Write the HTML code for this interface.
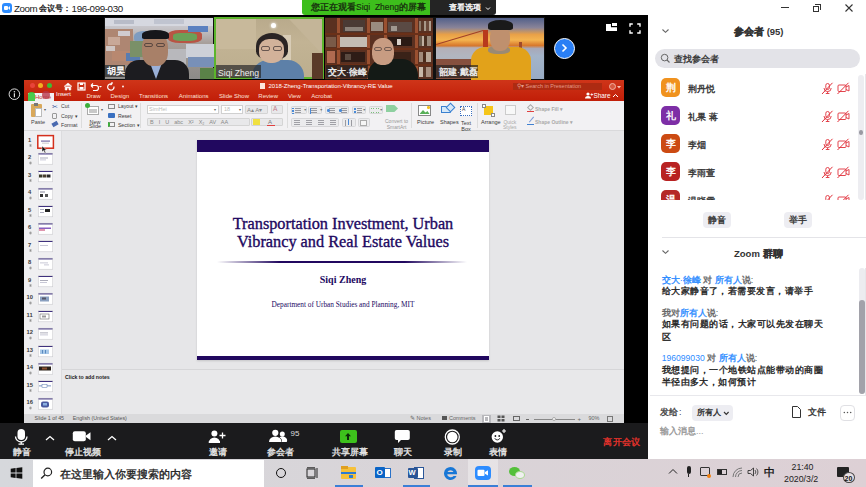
<!DOCTYPE html>
<html><head><meta charset="utf-8">
<style>
*{margin:0;padding:0;box-sizing:border-box}
html,body{width:866px;height:487px;overflow:hidden;background:#000;font-family:"Liberation Sans",sans-serif}
.a{position:absolute}
.t{position:absolute;white-space:nowrap;line-height:1}
.j{text-align:justify;text-align-last:justify}
.c{-webkit-text-stroke-width:.35px}
</style></head><body>
<!-- title bar -->
<div class="a" style="left:0;top:0;width:866px;height:15px;background:#fff"></div>
<div class="a" style="left:2px;top:3px;width:10px;height:10px;border-radius:3px;background:#2d8cff"></div>
<div class="a" style="left:4px;top:6px;width:4px;height:4px;background:#fff;border-radius:1px"></div>
<div class="a" style="left:8px;top:6px;width:0;height:0;border-top:2px solid transparent;border-bottom:2px solid transparent;border-right:2px solid #fff"></div>
<div class="t" style="left:14px;top:3.7px;font-size:9.8px;letter-spacing:-.45px;color:#222">Zoom</div>
<div class="t" style="left:39px;top:3.5px;font-size:8.4px;color:#222"><span class="c">会议号：</span></div>
<div class="t" style="left:71.6px;top:3.7px;font-size:9.8px;letter-spacing:-.4px;color:#222">196-099-030</div>
<!-- window controls -->
<div class="a" style="left:781px;top:7px;width:8px;height:1px;background:#333"></div>
<div class="a" style="left:813px;top:6px;width:6px;height:6px;border:1px solid #333"></div>
<div class="a" style="left:815px;top:4px;width:6px;height:6px;border-top:1px solid #333;border-right:1px solid #333"></div>
<svg class="a" style="left:844px;top:3px" width="10" height="10"><path d="M1.5 1.5L8.5 8.5M8.5 1.5L1.5 8.5" stroke="#333" stroke-width="1.1"/></svg>
<!-- banner -->
<div class="a" style="left:302px;top:0;width:128px;height:14.5px;background:#3dbf1c;border-radius:0 0 0 3px"></div>
<div class="t j" style="left:311px;top:3px;width:110px;font-size:8.5px;color:#17300e;-webkit-text-stroke:.15px #17300e"><span class="c">您正在观看</span>Siqi&nbsp; Zheng<span class="c">的屏幕</span></div>
<div class="a" style="left:430px;top:0;width:66px;height:14.5px;background:#242424;border-radius:0 0 3px 0"></div>
<div class="t j" style="left:449px;top:3.5px;width:29px;font-size:7.8px;color:#fff"><span class="c">查看选项</span></div>
<svg class="a" style="left:484.5px;top:5.5px" width="6" height="5"><path d="M1 1.5L3 3.5L5 1.5" stroke="#fff" stroke-width="1" fill="none"/></svg>


<!-- thumbnails -->
<div class="a" style="left:104px;top:17px;width:110px;height:63px;background:#111;overflow:hidden">
 <div class="a" style="left:1px;top:1px;width:108px;height:61px;background:linear-gradient(180deg,#d2d4dc 0%,#c4c2c6 18%,#a8a09c 40%,#9c9690 65%,#8c8a88 100%)"></div>
 <div class="a" style="left:1px;top:1px;width:108px;height:8px;background:#d6d8e0"></div>
 <div class="a" style="left:10px;top:3px;width:20px;height:4px;background:#b8bcc8"></div>
 <div class="a" style="left:50px;top:2px;width:30px;height:5px;background:#c0c4d0"></div>
 <div class="a" style="left:1px;top:12px;width:28px;height:36px;background:#ae8672"></div>
 <div class="a" style="left:14px;top:14px;width:12px;height:5px;background:#d0ccd0"></div>
 <div class="a" style="left:2px;top:29px;width:9px;height:5px;background:#cfc6c4"></div>
 <div class="a" style="left:4px;top:20px;width:12px;height:8px;background:#c8a898"></div>
 <div class="a" style="left:8px;top:34px;width:18px;height:10px;background:#b88870"></div>
 <div class="a" style="left:22px;top:36px;width:14px;height:8px;background:#5a7cb0"></div>
 <div class="a" style="left:30px;top:14px;width:24px;height:13px;background:#7e9cc0;border-radius:40%"></div>
 <div class="a" style="left:26px;top:24px;width:14px;height:16px;background:#7a9068"></div>
 <div class="a" style="left:64px;top:13px;width:34px;height:13px;background:#b85444;border-radius:35%"></div>
 <div class="a" style="left:69px;top:15.5px;width:24px;height:8px;background:#6aa058;border-radius:30%"></div>
 <div class="a" style="left:84px;top:9px;width:20px;height:6px;background:#5a80c0"></div>
 <div class="a" style="left:82px;top:27px;width:28px;height:14px;background:#cdd0d8"></div>
 <div class="a" style="left:84px;top:40px;width:26px;height:10px;background:#7890b8"></div>
 <div class="a" style="left:62px;top:32px;width:20px;height:26px;background:#b8b8bc"></div>
 <div class="a" style="left:96px;top:51px;width:14px;height:11px;background:#5a8248"></div>
 <div class="a" style="left:21px;top:43px;width:64px;height:22px;background:#1c1c20;border-radius:14px 14px 0 0"></div>
 <div class="a" style="left:46px;top:46px;width:12px;height:16px;background:#9ab0d8;clip-path:polygon(0 0,100% 0,50% 100%)"></div>
 <div class="a" style="left:38px;top:15px;width:26px;height:34px;background:#a88068;border-radius:45% 45% 40% 40%"></div>
 <div class="a" style="left:37.5px;top:13px;width:27px;height:9px;background:#16161a;border-radius:50% 50% 15% 15%"></div>
 <div class="a" style="left:40px;top:26px;width:9px;height:4px;border:.8px solid #3a3030;border-radius:2px;opacity:.7"></div>
 <div class="a" style="left:52px;top:26px;width:9px;height:4px;border:.8px solid #3a3030;border-radius:2px;opacity:.7"></div>
 <div class="a" style="left:1px;top:48px;width:20px;height:12px;background:rgba(20,20,20,.6)"></div>
 <div class="t j" style="width:16.5px;left:3px;top:50px;font-size:9px;color:#fff"><span class="c">胡昊</span></div>
</div>
<div class="a" style="left:214px;top:17px;width:110px;height:62px;background:#5cb52c;overflow:hidden">
 <div class="a" style="left:2px;top:2px;width:106px;height:58px;background:linear-gradient(180deg,#b9aa8c 0%,#c2b394 40%,#bcae8e 100%)"></div>
 <div class="a" style="left:2px;top:2px;width:40px;height:30px;background:#c8b99b"></div>
 <div class="a" style="left:75px;top:2px;width:33px;height:35px;background:#c4b598;clip-path:polygon(0 0,100% 0,100% 100%)"></div>
 <div class="a" style="left:57px;top:6px;width:5px;height:5px;background:#fff;border-radius:50%;box-shadow:0 0 3px #fff"></div>
 <div class="a" style="left:69px;top:18px;width:8px;height:28px;background:#d8ccb6"></div>
 <div class="a" style="left:98px;top:36px;width:11px;height:26px;background:#5a3a28"></div>
 <div class="a" style="left:38px;top:43px;width:52px;height:20px;background:#5d80a8;border-radius:16px 16px 0 0"></div>
 <div class="a" style="left:42px;top:16px;width:32px;height:26px;background:#2a2424;border-radius:50% 50% 30% 30%"></div>
 <div class="a" style="left:45px;top:22px;width:25px;height:24px;background:#d2b29a;border-radius:40% 40% 45% 45%"></div>
 <div class="a" style="left:47px;top:29px;width:9px;height:5px;border:.8px solid #3a3030;border-radius:2px;opacity:.7"></div>
 <div class="a" style="left:59px;top:29px;width:9px;height:5px;border:.8px solid #3a3030;border-radius:2px;opacity:.7"></div>
 <div class="a" style="left:2px;top:48px;width:44.6px;height:13px;background:rgba(40,40,40,.7)"></div>
 <div class="t" style="left:4px;top:51.5px;font-size:8.6px;color:#eee">Siqi Zheng</div>
</div>
<div class="a" style="left:325px;top:17px;width:110px;height:63px;background:#111;overflow:hidden">
 <div class="a" style="left:0;top:1px;width:108px;height:61px;background:#5a3020"></div>
 <div class="a" style="left:12px;top:1px;width:3px;height:61px;background:#9a5030"></div>
 <div class="a" style="left:42px;top:1px;width:3px;height:61px;background:#9a5030"></div>
 <div class="a" style="left:59px;top:1px;width:3px;height:61px;background:#9a5030"></div>
 <div class="a" style="left:90px;top:1px;width:3px;height:61px;background:#9a5030"></div>
 <div class="a" style="left:0;top:16px;width:108px;height:2px;background:#6a3018"></div>
 <div class="a" style="left:0;top:31px;width:108px;height:2px;background:#6a3018"></div>
 <div class="a" style="left:0;top:47px;width:108px;height:2px;background:#6a3018"></div>
 <div class="a" style="left:15px;top:20px;width:27px;height:10px;background:#c4bcb2"></div>
 <div class="a" style="left:46px;top:5px;width:12px;height:9px;background:#9a8c80"></div>
 <div class="a" style="left:2px;top:34px;width:8px;height:12px;background:#b06a50"></div>
 <div class="a" style="left:18px;top:3px;width:22px;height:12px;background:#4a3a34"></div>
 <div class="a" style="left:20px;top:10px;width:18px;height:4px;background:#8a8078"></div>
 <div class="a" style="left:63px;top:5px;width:24px;height:10px;background:#5a4a44"></div>
 <div class="a" style="left:66px;top:9px;width:6px;height:5px;background:#a09890"></div>
 <div class="a" style="left:94px;top:4px;width:12px;height:10px;background:linear-gradient(90deg,#8a7a6a 0 20%,#5a3a2a 20% 40%,#a89888 40% 60%,#6a4a3a 60% 80%,#b0a090 80%)"></div>
 <div class="a" style="left:94px;top:19px;width:12px;height:10px;background:linear-gradient(90deg,#6a5a4a 0 25%,#c0b0a0 25% 45%,#4a3020 45% 70%,#9a8a7a 70%)"></div>
 <div class="a" style="left:94px;top:35px;width:12px;height:10px;background:linear-gradient(90deg,#a08a7a 0 30%,#4a2a1a 30% 55%,#b8a898 55%)"></div>
 <div class="a" style="left:94px;top:50px;width:12px;height:10px;background:linear-gradient(90deg,#c8b8a8 0 35%,#5a3a2a 35% 60%,#a89080 60%)"></div>
 <div class="a" style="left:63px;top:20px;width:24px;height:9px;background:#2a1a14"></div>
 <div class="a" style="left:72px;top:22px;width:4px;height:6px;background:#d8d0c8"></div>
 <div class="a" style="left:66px;top:35px;width:20px;height:10px;background:#3a2218"></div>
 <div class="a" style="left:16px;top:35px;width:24px;height:10px;background:#2e1c16"></div>
 <div class="a" style="left:20px;top:37px;width:6px;height:6px;background:#5a4a40"></div>
 <div class="a" style="left:1px;top:20px;width:10px;height:10px;background:#7a5a48"></div>
 <div class="a" style="left:43px;top:42px;width:50px;height:22px;background:#141a16;border-radius:16px 16px 0 0"></div>
 <div class="a" style="left:47px;top:21px;width:22px;height:27px;background:#c89c82;border-radius:45% 45% 40% 40%"></div>
 <div class="a" style="left:48.5px;top:30px;width:8px;height:4px;border:.8px solid #3a3030;border-radius:2px;opacity:.6"></div>
 <div class="a" style="left:59px;top:30px;width:8px;height:4px;border:.8px solid #3a3030;border-radius:2px;opacity:.6"></div>
 <div class="a" style="left:1px;top:48px;width:42px;height:13px;background:rgba(30,30,30,.65)"></div>
 <div class="t j" style="width:38.5px;left:3px;top:51px;font-size:9px;color:#eee"><span class="c">交大</span>·<span class="c">徐峰</span></div>
</div>
<div class="a" style="left:435px;top:17px;width:110px;height:63px;background:#111;overflow:hidden">
 <div class="a" style="left:1px;top:1px;width:108px;height:61px;background:linear-gradient(180deg,#52608a 0%,#8a8498 16%,#e8a048 27%,#f4b450 36%,#d8782c 45%,#a8a8b8 50%,#a4b4c8 62%,#98acc4 100%)"></div>
 <div class="a" style="left:1px;top:42px;width:40px;height:20px;background:#86503e"></div>
 <div class="a" style="left:1px;top:30px;width:50px;height:12px;background:#c0b8b8;opacity:.5"></div>
 <div class="a" style="left:1px;top:27px;width:49px;height:1px;background:#a04028;transform:rotate(-16.6deg);transform-origin:0 0"></div>
 <div class="a" style="left:47.5px;top:13px;width:5px;height:17px;background:#b83a1c"></div>
 <div class="a" style="left:84px;top:25px;width:3px;height:10px;background:#a04a2a"></div>
 <div class="a" style="left:36px;top:30px;width:60px;height:35px;background:#e2a21a;border-radius:14px 14px 0 0"></div>
 <div class="a" style="left:53px;top:29px;width:22px;height:8px;background:#9a8a74;border-radius:40%"></div>
 <div class="a" style="left:55px;top:9px;width:20px;height:25px;background:#bf906e;border-radius:40% 40% 45% 45%"></div>
 <div class="a" style="left:53px;top:3px;width:25px;height:10px;background:#1a1a1a;border-radius:50% 50% 20% 20%"></div>
 <div class="a" style="left:1px;top:48px;width:42px;height:13px;background:rgba(30,30,30,.65)"></div>
 <div class="t j" style="width:39px;left:4px;top:51px;font-size:9px;color:#eee"><span class="c">韶建</span>·<span class="c">戴磊</span></div>
</div>
<div class="a" style="left:553.5px;top:37.5px;width:21px;height:21px;border-radius:50%;background:#2a7ff5;border:1.5px solid #fff"></div>
<svg class="a" style="left:558px;top:42px" width="12" height="12"><path d="M4.5 2.5L8 6L4.5 9.5" stroke="#fff" stroke-width="1.6" fill="none"/></svg>
<div class="a" style="left:606px;top:24px;width:11px;height:7px;background:#fff;clip-path:polygon(0 0,45% 0,45% 45%,100% 45%,100% 100%,0 100%)"></div>
<div class="a" style="left:612px;top:23px;width:5px;height:3px;background:#fff"></div>
<svg class="a" style="left:628.5px;top:22.5px" width="12" height="11"><path d="M1 3.8V1H3.8M8.2 1H11V3.8M11 7.2V10H8.2M3.8 10H1V7.2" stroke="#fff" stroke-width="1.4" fill="none"/></svg>
<!-- info icon -->
<svg class="a" style="left:8px;top:87.5px" width="13" height="13"><circle cx="6.4" cy="6.2" r="5.3" fill="none" stroke="#ddd" stroke-width="1"/><circle cx="6.4" cy="3.7" r=".8" fill="#ddd"/><path d="M6.4 5.3V9.2" stroke="#ddd" stroke-width="1.2"/></svg>


<!-- zoom toolbar -->
<div class="a" style="left:0;top:423px;width:648px;height:36px;background:#1b1b1d"></div>
<svg class="a" style="left:12px;top:428px" width="20" height="18">
 <rect x="5.5" y="1" width="7.5" height="11" rx="3.75" fill="#fff"/>
 <path d="M3.5 8.5A5.75 5.5 0 0 0 15 8.5" fill="none" stroke="#fff" stroke-width="1.3"/>
 <path d="M9.25 14V16M6.5 16.2H12" stroke="#fff" stroke-width="1.2"/>
</svg>
<svg class="a" style="left:44px;top:434px" width="12" height="8"><path d="M2 6L6 2.5L10 6" stroke="#fff" stroke-width="1.3" fill="none"/></svg>
<svg class="a" style="left:72px;top:430px" width="20" height="13"><rect x="0.8" y="1.3" width="13" height="10" rx="2" fill="#fff"/><path d="M14 5.5L18.5 2.2V10.3L14 7Z" fill="#fff"/></svg>
<svg class="a" style="left:106px;top:434px" width="12" height="8"><path d="M2 6L6 2.5L10 6" stroke="#fff" stroke-width="1.3" fill="none"/></svg>
<svg class="a" style="left:206px;top:428px" width="22" height="17">
 <circle cx="8.4" cy="5.5" r="3" fill="#fff"/>
 <path d="M2.8 15A5.6 5.6 0 0 1 14 15Z" fill="#fff"/><rect x="2.8" y="13" width="11.2" height="2" fill="#fff"/>
 <path d="M13.5 7.5H19.5M16.5 4.5V10.5" stroke="#fff" stroke-width="1.3"/>
</svg>
<svg class="a" style="left:267px;top:428px" width="22" height="16">
 <circle cx="8.3" cy="4.8" r="3.1" fill="#fff"/>
 <circle cx="15.3" cy="6" r="2.5" fill="#fff"/>
 <path d="M2 14A6.3 5.5 0 0 1 14.6 14Z" fill="#fff"/>
 <path d="M15 14A4.5 4.5 0 0 0 12.5 9.5A4.5 4 0 0 1 19.7 14Z" fill="#fff"/>
</svg>
<div class="t" style="left:290.6px;top:429.5px;font-size:8px;color:#ddd">95</div>
<div class="a" style="left:339.6px;top:430.2px;width:17px;height:12.6px;background:#3dc11c;border-radius:2px"></div>
<svg class="a" style="left:344px;top:432px" width="8" height="9"><path d="M4 1L7 4.2H5V8H3V4.2H1Z" fill="#0c2a08"/></svg>
<svg class="a" style="left:394px;top:429px" width="17" height="15"><path d="M2.5 1H14A1.8 1.8 0 0 1 15.8 2.8V9.2A1.8 1.8 0 0 1 14 11H7L4 14V11H2.5A1.8 1.8 0 0 1 .8 9.2V2.8A1.8 1.8 0 0 1 2.5 1Z" fill="#fff"/></svg>
<svg class="a" style="left:444px;top:428.5px" width="17" height="17"><circle cx="8.3" cy="8" r="7" fill="none" stroke="#fff" stroke-width="1.3"/><circle cx="8.3" cy="8" r="5.2" fill="#fff"/></svg>
<svg class="a" style="left:490px;top:428px" width="18" height="16">
 <circle cx="7.3" cy="9" r="5.7" fill="#fff"/>
 <circle cx="5.4" cy="8" r=".9" fill="#1b1b1d"/><circle cx="9.2" cy="8" r=".9" fill="#1b1b1d"/>
 <path d="M4.8 10.2A2.6 2.4 0 0 0 9.8 10.2" fill="none" stroke="#1b1b1d" stroke-width=".9"/>
 <path d="M12 3H16M14 1V5" stroke="#fff" stroke-width="1.1"/>
</svg>
<div class="t j" style="width:18px;left:13px;top:448px;font-size:8.8px;color:#e6e6e6"><span class="c">静音</span></div>
<div class="t j" style="width:33.6px;left:65px;top:447.5px;font-size:8.8px;color:#e6e6e6"><span class="c">停止视频</span></div>
<div class="t j" style="width:17.2px;left:208.6px;top:447.5px;font-size:8.8px;color:#e6e6e6"><span class="c">邀请</span></div>
<div class="t j" style="width:25px;left:266.7px;top:447.5px;font-size:8.8px;color:#e6e6e6"><span class="c">参会者</span></div>
<div class="t j" style="width:33.2px;left:331.5px;top:447.5px;font-size:8.8px;color:#e6e6e6"><span class="c">共享屏幕</span></div>
<div class="t j" style="width:16.8px;left:394.1px;top:447.5px;font-size:8.8px;color:#e6e6e6"><span class="c">聊天</span></div>
<div class="t j" style="width:16.3px;left:444.1px;top:447.5px;font-size:8.8px;color:#e6e6e6"><span class="c">录制</span></div>
<div class="t j" style="width:16.8px;left:488.7px;top:447.5px;font-size:8.8px;color:#e6e6e6"><span class="c">表情</span></div>
<div class="t j" style="width:37.3px;left:603.2px;top:438px;font-size:9px;color:#e8332c"><span class="c">离开会议</span></div>

<!-- right panel -->
<div class="a" style="left:648px;top:15px;width:218px;height:444px;background:#fff"></div>


<!-- right panel content -->
<svg class="a" style="left:661px;top:28px" width="9" height="6"><path d="M1.5 1.5L4.5 4.3L7.5 1.5" stroke="#666" stroke-width="1.1" fill="none"/></svg>
<div class="t j" style="width:47px;left:734px;top:26.5px;font-size:9.5px;color:#333;font-weight:bold"><span class="c">参会者</span> (95)</div>
<div class="a" style="left:655px;top:49px;width:205px;height:19px;border-radius:9.5px;background:#e3e3e8"></div>
<svg class="a" style="left:660px;top:53px" width="11" height="11"><circle cx="4.6" cy="4.6" r="3.3" fill="none" stroke="#666" stroke-width="1"/><path d="M7 7L9.5 9.5" stroke="#666" stroke-width="1.1"/></svg>
<div class="t j" style="width:43.5px;left:673.5px;top:54.5px;font-size:8.6px;color:#333"><span class="c">查找参会者</span></div>
<div class="a" style="left:648px;top:74px;width:210px;height:126px;overflow:hidden">
<div class="a" style="left:13px;top:4px;width:19px;height:19px;border-radius:5px;background:#f0921e"></div>
<div class="t" style="left:13px;width:19px;text-align:center;top:9px;font-size:9.5px;color:#fff"><span class="c">荆</span></div>
<div class="t j" style="left:40px;width:26.5px;top:11px;font-size:9px;color:#333"><span class="c">荆丹悦</span></div>
<svg class="a" style="left:173px;top:8px" width="30" height="13">
 <rect x="4.8" y="1.5" width="3.6" height="6" rx="1.8" fill="none" stroke="#e0303a" stroke-width=".9"/>
 <path d="M3 6A3.6 3.6 0 0 0 10.2 6M6.6 9.6V11.5M4.8 11.5H8.4" stroke="#e0303a" stroke-width=".9" fill="none"/>
 <path d="M1 12L11.5 .8" stroke="#e0303a" stroke-width="1"/>
 <rect x="17" y="3" width="8" height="6.5" rx="1" fill="none" stroke="#e0303a" stroke-width=".9"/>
 <path d="M25 5L28 3.5V9L25 7.5" fill="none" stroke="#e0303a" stroke-width=".9"/>
 <path d="M16.5 12L27.5 .8" stroke="#e0303a" stroke-width="1"/>
</svg>
<div class="a" style="left:13px;top:32px;width:19px;height:19px;border-radius:5px;background:#7d2ea6"></div>
<div class="t" style="left:13px;width:19px;text-align:center;top:37px;font-size:9.5px;color:#fff"><span class="c">礼</span></div>
<div class="t j" style="left:40px;width:29px;top:39px;font-size:9px;color:#333"><span class="c">礼果</span> <span class="c">蒋</span></div>
<svg class="a" style="left:173px;top:36px" width="30" height="13">
 <rect x="4.8" y="1.5" width="3.6" height="6" rx="1.8" fill="none" stroke="#e0303a" stroke-width=".9"/>
 <path d="M3 6A3.6 3.6 0 0 0 10.2 6M6.6 9.6V11.5M4.8 11.5H8.4" stroke="#e0303a" stroke-width=".9" fill="none"/>
 <path d="M1 12L11.5 .8" stroke="#e0303a" stroke-width="1"/>
 <rect x="17" y="3" width="8" height="6.5" rx="1" fill="none" stroke="#e0303a" stroke-width=".9"/>
 <path d="M25 5L28 3.5V9L25 7.5" fill="none" stroke="#e0303a" stroke-width=".9"/>
 <path d="M16.5 12L27.5 .8" stroke="#e0303a" stroke-width="1"/>
</svg>
<div class="a" style="left:13px;top:60px;width:19px;height:19px;border-radius:5px;background:#cc4a12"></div>
<div class="t" style="left:13px;width:19px;text-align:center;top:65px;font-size:9.5px;color:#fff"><span class="c">李</span></div>
<div class="t j" style="left:40px;width:17.5px;top:67px;font-size:9px;color:#333"><span class="c">李烟</span></div>
<svg class="a" style="left:173px;top:64px" width="30" height="13">
 <rect x="4.8" y="1.5" width="3.6" height="6" rx="1.8" fill="none" stroke="#e0303a" stroke-width=".9"/>
 <path d="M3 6A3.6 3.6 0 0 0 10.2 6M6.6 9.6V11.5M4.8 11.5H8.4" stroke="#e0303a" stroke-width=".9" fill="none"/>
 <path d="M1 12L11.5 .8" stroke="#e0303a" stroke-width="1"/>
 <rect x="17" y="3" width="8" height="6.5" rx="1" fill="none" stroke="#e0303a" stroke-width=".9"/>
 <path d="M25 5L28 3.5V9L25 7.5" fill="none" stroke="#e0303a" stroke-width=".9"/>
 <path d="M16.5 12L27.5 .8" stroke="#e0303a" stroke-width="1"/>
</svg>
<div class="a" style="left:13px;top:88px;width:19px;height:19px;border-radius:5px;background:#b82222"></div>
<div class="t" style="left:13px;width:19px;text-align:center;top:93px;font-size:9.5px;color:#fff"><span class="c">李</span></div>
<div class="t j" style="left:40px;width:26.5px;top:95px;font-size:9px;color:#333"><span class="c">李雨萱</span></div>
<svg class="a" style="left:173px;top:92px" width="30" height="13">
 <rect x="4.8" y="1.5" width="3.6" height="6" rx="1.8" fill="none" stroke="#e0303a" stroke-width=".9"/>
 <path d="M3 6A3.6 3.6 0 0 0 10.2 6M6.6 9.6V11.5M4.8 11.5H8.4" stroke="#e0303a" stroke-width=".9" fill="none"/>
 <path d="M1 12L11.5 .8" stroke="#e0303a" stroke-width="1"/>
 <rect x="17" y="3" width="8" height="6.5" rx="1" fill="none" stroke="#e0303a" stroke-width=".9"/>
 <path d="M25 5L28 3.5V9L25 7.5" fill="none" stroke="#e0303a" stroke-width=".9"/>
 <path d="M16.5 12L27.5 .8" stroke="#e0303a" stroke-width="1"/>
</svg>
<div class="a" style="left:13px;top:116px;width:19px;height:19px;border-radius:5px;background:#b52828"></div>
<div class="t" style="left:13px;width:19px;text-align:center;top:121px;font-size:9.5px;color:#fff"><span class="c">温</span></div>
<div class="t j" style="left:40px;width:26.5px;top:123px;font-size:9px;color:#333"><span class="c">温晓雪</span></div>
<svg class="a" style="left:173px;top:120px" width="30" height="13">
 <rect x="4.8" y="1.5" width="3.6" height="6" rx="1.8" fill="none" stroke="#e0303a" stroke-width=".9"/>
 <path d="M3 6A3.6 3.6 0 0 0 10.2 6M6.6 9.6V11.5M4.8 11.5H8.4" stroke="#e0303a" stroke-width=".9" fill="none"/>
 <path d="M1 12L11.5 .8" stroke="#e0303a" stroke-width="1"/>
 <rect x="17" y="3" width="8" height="6.5" rx="1" fill="none" stroke="#e0303a" stroke-width=".9"/>
 <path d="M25 5L28 3.5V9L25 7.5" fill="none" stroke="#e0303a" stroke-width=".9"/>
 <path d="M16.5 12L27.5 .8" stroke="#e0303a" stroke-width="1"/>
</svg>
</div>
<div class="a" style="left:858.3px;top:74.5px;width:5.3px;height:125px;border-radius:3px;background:#ededf1"></div>
<div class="a" style="left:858.8px;top:129.5px;width:4.5px;height:5px;border-radius:50%;background:#9a9aa2"></div>
<div class="a" style="left:865px;top:74px;width:1px;height:126px;background:#e6e6ea"></div>
<div class="a" style="left:865px;top:268px;width:1px;height:127px;background:#e6e6ea"></div>
<div class="a" style="left:703px;top:212px;width:27.5px;height:16px;border-radius:4px;background:#ededf2"></div>
<div class="t j" style="width:18px;left:708.2px;top:215.5px;font-size:9px;color:#333"><span class="c">静音</span></div>
<div class="a" style="left:784px;top:212px;width:27.5px;height:16px;border-radius:4px;background:#ededf2"></div>
<div class="t j" style="width:18px;left:789.2px;top:215.5px;font-size:9px;color:#333"><span class="c">举手</span></div>
<div class="a" style="left:662px;top:237px;width:204px;height:1px;background:#e4e4e8"></div>
<svg class="a" style="left:661px;top:249px" width="9" height="6"><path d="M1.5 1.5L4.5 4.3L7.5 1.5" stroke="#666" stroke-width="1.1" fill="none"/></svg>
<div class="t j" style="width:46.5px;left:734px;top:248.5px;font-size:9.5px;color:#333;font-weight:bold">Zoom <span class="c">群聊</span></div>
<div class="t j" style="left:661.7px;top:275.5px;width:89px;font-size:9.1px;color:#666"><span style="color:#2d8cff"><span class="c">交大</span>·<span class="c">徐峰</span></span> <span class="c">对</span> <span style="color:#2d8cff"><span class="c">所有人</span></span><span class="c">说</span>:</div>
<div class="t j" style="left:661.7px;top:286.6px;width:151px;font-size:9.1px;color:#222"><span class="c">给大家静音了，若需要发言，请举手</span></div>
<div class="t j" style="left:661.7px;top:308.6px;width:54.5px;font-size:9.1px;color:#666"><span class="c">我对</span><span style="color:#2d8cff"><span class="c">所有人</span></span><span class="c">说</span>:</div>
<div class="t j" style="left:661.7px;top:320.3px;width:161px;font-size:9.1px;color:#222"><span class="c">如果有问题的话，大家可以先发在聊天</span></div>
<div class="t" style="left:661.7px;top:332.5px;font-size:9.1px;color:#222"><span class="c">区</span></div>
<div class="t j" style="left:661.7px;top:354.2px;width:91px;font-size:9.1px;color:#666"><span style="color:#2d8cff;font-size:8.6px">196099030</span> <span class="c">对</span> <span style="color:#2d8cff"><span class="c">所有人</span></span><span class="c">说</span>:</div>
<div class="t j" style="left:661.7px;top:366.1px;width:161px;font-size:9.1px;color:#222"><span class="c">我想提问，一个地铁站点能带动的商圈</span></div>
<div class="t j" style="left:661.7px;top:377.9px;width:94px;font-size:9.1px;color:#222"><span class="c">半径由多大，如何预计</span></div>
<div class="a" style="left:859px;top:268px;width:5.7px;height:126px;border-radius:3px;background:#ececf0"></div>
<div class="a" style="left:859px;top:300px;width:5.7px;height:94px;border-radius:3px;background:#a2a2aa"></div>
<div class="a" style="left:650px;top:395px;width:216px;height:1px;background:#e8e8ec"></div>
<div class="t j" style="width:21.5px;left:660px;top:408px;font-size:9px;color:#444"><span class="c">发给</span>:</div>
<div class="a" style="left:692px;top:405px;width:41px;height:15.5px;border-radius:4px;background:#ededf2"></div>
<div class="t j" style="left:696.5px;top:408.8px;width:22px;font-size:7.6px;color:#333"><span class="c">所有人</span></div>
<svg class="a" style="left:722.5px;top:410.5px" width="7" height="5"><path d="M1 1L3.3 3.3L5.6 1" stroke="#333" stroke-width="1.2" fill="none"/></svg>
<svg class="a" style="left:791px;top:405px" width="11" height="14"><path d="M1.5 1.5H6.5L9.5 4.5V12.5H1.5Z" fill="none" stroke="#333" stroke-width="1"/></svg>
<div class="t j" style="width:17.5px;left:807.6px;top:408px;font-size:8.5px;color:#333"><span class="c">文件</span></div>
<div class="a" style="left:839.5px;top:404.5px;width:15.5px;height:16px;border-radius:4px;border:1px solid #e0e0e4;background:#fff"></div>
<svg class="a" style="left:843px;top:411px" width="9" height="3"><circle cx="1.3" cy="1.5" r=".75" fill="#555"/><circle cx="4.5" cy="1.5" r=".75" fill="#555"/><circle cx="7.7" cy="1.5" r=".75" fill="#555"/></svg>
<div class="t j" style="width:43px;left:660px;top:427px;font-size:9px;color:#999"><span class="c">输入消息</span>...</div>

<!-- PPT window -->
<div class="a" style="left:24px;top:80px;width:600px;height:21px;background:linear-gradient(#cf3519,#c11e08)"></div>
<div class="a" style="left:24px;top:101px;width:600px;height:30px;background:#f2f1f3;border-bottom:1px solid #d9d9db"></div>
<div class="a" style="left:24px;top:131px;width:38px;height:283px;background:#efeff1;border-right:1px solid #dcdcde"></div>
<div class="a" style="left:62px;top:131px;width:562px;height:238px;background:#e6e6e8"></div>
<div class="a" style="left:62px;top:369px;width:562px;height:45px;background:#e8e8ea;border-top:1px solid #d6d6d8"></div>
<div class="a" style="left:24px;top:414px;width:600px;height:9px;background:#dadadc"></div>


<!-- PPT titlebar details -->
<div class="a" style="left:30px;top:83px;width:5px;height:5px;border-radius:50%;background:#e8443a"></div>
<div class="a" style="left:38.2px;top:83px;width:5px;height:5px;border-radius:50%;background:#f3ad22"></div>
<div class="a" style="left:46.7px;top:83px;width:5px;height:5px;border-radius:50%;background:#3dbc34"></div>
<svg class="a" style="left:62px;top:81px" width="70" height="11">
 <path d="M2 5.5L6 2L10 5.5M3.2 4.8V9H5V7H7V9H8.8V4.8" fill="#fff" stroke="#fff" stroke-width=".6"/>
 <rect x="16" y="2" width="7" height="7" fill="none" stroke="#fff" stroke-width="1.2"/><rect x="18" y="2" width="3" height="2" fill="#fff"/><rect x="17.5" y="6" width="4" height="2.5" fill="#fff"/>
 <path d="M29 4.5H34A2.5 2.5 0 0 1 34 9.5H31M29 4.5L31 2.5M29 4.5L31 6.5" fill="none" stroke="#fff" stroke-width="1.2"/>
 <path d="M37 5L38.5 6.5L40 5" fill="#fff"/>
 <path d="M50 3A3.2 3.2 0 1 0 52 5.5M50 3V1M50 3L48.5 4" fill="none" stroke="#fff" stroke-width="1.2"/>
 <circle cx="61" cy="5.5" r=".9" fill="#fff"/>
</svg>
<div class="a" style="left:260px;top:83px;width:5px;height:6px;background:#fde6df"></div>
<div class="t" style="left:268.5px;top:83px;font-size:6px;color:#fff;letter-spacing:-.02px">2018-Zheng-Transportation-Vibrancy-RE Value</div>
<div class="a" style="left:513px;top:82.5px;width:89px;height:7.5px;background:#ad2b12"></div>
<div class="t" style="left:517px;top:83.5px;font-size:5.5px;color:#e59a88">&#9906;&#9662; Search in Presentation</div>
<div class="a" style="left:609px;top:83px;width:7px;height:7px;border-radius:50%;border:1px solid #f2b4a4;background:#d85a40"></div>
<svg class="a" style="left:617px;top:85.5px" width="4" height="3"><path d="M0 0H4L2 2.5Z" fill="#f7c4b8"/></svg>
<!-- tabs -->
<div class="a" style="left:28px;top:93px;width:25.6px;height:8px;background:#f2f1f3"></div>
<div class="t" style="left:35px;top:94px;font-size:6px;color:#c0301a">Home</div>
<div class="a" style="left:28px;top:92px;width:7px;height:9px;background:#39c53b;border-radius:3px 3px 0 0;opacity:.9"></div>
<div class="a" style="left:42px;top:91px;width:8px;height:8px;border-radius:50%;background:#b8384a;opacity:.8"></div>
<div class="t" style="left:56px;top:91px;font-size:6px;color:#fff">Insert</div>
<div class="t" style="left:86.5px;top:92.8px;font-size:6px;color:#fde0d8">Draw</div>
<div class="t" style="left:110.5px;top:92.8px;font-size:6px;color:#fde0d8">Design</div>
<div class="t" style="left:139px;top:92.8px;font-size:6px;color:#fde0d8">Transitions</div>
<div class="t" style="left:178.8px;top:92.8px;font-size:6px;color:#fde0d8">Animations</div>
<div class="t" style="left:219px;top:92.8px;font-size:6px;color:#fde0d8">Slide Show</div>
<div class="t" style="left:258.3px;top:92.8px;font-size:6px;color:#fde0d8">Review</div>
<div class="t" style="left:287.9px;top:92.8px;font-size:6px;color:#fde0d8">View</div>
<div class="t" style="left:311.3px;top:92.8px;font-size:6px;color:#fde0d8">Acrobat</div>
<svg class="a" style="left:584.5px;top:91.5px" width="8" height="7"><circle cx="3" cy="2" r="1.6" fill="#fff"/><path d="M0 6.5A3 2.5 0 0 1 6 6.5Z" fill="#fff"/><path d="M5.5 2.5H8M6.75 1.3V3.7" stroke="#fff" stroke-width=".8"/></svg>
<div class="t" style="left:593.4px;top:93px;font-size:6.4px;color:#fff">Share</div>
<svg class="a" style="left:612px;top:93px" width="7" height="5"><path d="M1 4L3.5 1.5L6 4" stroke="#fff" stroke-width="1" fill="none"/></svg>
<!-- ribbon -->
<div class="a" style="left:30.5px;top:104px;width:11px;height:13px;background:#d9a85a;border-radius:1px"></div>
<div class="a" style="left:34px;top:103px;width:4px;height:3px;background:#777"></div>
<div class="a" style="left:35px;top:108px;width:7px;height:9px;background:#fff;border:0.5px solid #bbb"></div>
<div class="t" style="left:44px;top:108px;font-size:4px;color:#555">&#9662;</div>
<div class="t" style="left:31px;top:119.5px;font-size:5.5px;color:#444">Paste</div>
<div class="t" style="left:52px;top:103.5px;font-size:6.5px;color:#3b5aa0">&#9986;</div>
<div class="a" style="left:52px;top:112.5px;width:5px;height:6px;border:0.8px solid #999;border-radius:1px"></div>
<div class="a" style="left:52px;top:122px;width:6px;height:4px;background:#4a6ab0;transform:rotate(-30deg)"></div>
<div class="t" style="left:61px;top:104px;font-size:5.2px;color:#3a3a3a">Cut</div>
<div class="t" style="left:61px;top:113.5px;font-size:5.2px;color:#3a3a3a">Copy &#9662;</div>
<div class="t" style="left:61px;top:122.8px;font-size:5.2px;color:#3a3a3a">Format</div>
<div class="a" style="left:81px;top:103px;width:1px;height:25px;background:#dcdcdc"></div>
<div class="a" style="left:87px;top:106px;width:12px;height:9px;background:#fff;border:0.8px solid #aaa"></div>
<div class="a" style="left:89px;top:109px;width:8px;height:4px;background:#c8c8c8"></div>
<div class="a" style="left:85px;top:103px;width:5px;height:5px;border-radius:50%;background:#3cae3c"></div>
<div class="t" style="left:101px;top:108px;font-size:4px;color:#555">&#9662;</div>
<div class="t" style="left:85px;width:20px;text-align:center;top:119.5px;font-size:5.5px;color:#3a3a3a">New</div>
<div class="t" style="left:85px;width:20px;text-align:center;top:124px;font-size:5.5px;color:#3a3a3a">Slide</div>
<div class="a" style="left:108px;top:103.5px;width:7px;height:5px;border:0.8px solid #888"></div>
<div class="a" style="left:108px;top:113px;width:7px;height:5px;background:#3a70c0;border-radius:1px"></div>
<div class="a" style="left:108px;top:122px;width:7px;height:5px;border:0.8px solid #888;border-left:2px solid #3cae3c"></div>
<div class="t" style="left:117.9px;top:104px;font-size:5.2px;color:#3a3a3a">Layout &#9662;</div>
<div class="t" style="left:117.9px;top:113.5px;font-size:5.2px;color:#3a3a3a">Reset</div>
<div class="t" style="left:117.9px;top:122.8px;font-size:5.2px;color:#3a3a3a">Section &#9662;</div>
<div class="a" style="left:140px;top:103px;width:1px;height:25px;background:#dcdcdc"></div>
<div class="a" style="left:146.5px;top:104.8px;width:72px;height:9.2px;background:#fff;border:0.5px solid #d0d0d0"></div>
<div class="t" style="left:149px;top:107px;font-size:5.5px;color:#bbb">SimHei</div>
<div class="t" style="left:214px;top:107.5px;font-size:4px;color:#666">&#9662;</div>
<div class="a" style="left:221.3px;top:104.8px;width:21.3px;height:9.2px;background:#fff;border:0.5px solid #d0d0d0"></div>
<div class="t" style="left:224px;top:107px;font-size:5.5px;color:#bbb">18</div>
<div class="t" style="left:239px;top:107.5px;font-size:4px;color:#666">&#9662;</div>
<div class="a" style="left:245.4px;top:104.8px;width:23px;height:9.2px;background:#e8e8ea;border:0.5px solid #d4d4d4;border-radius:1px"></div>
<div class="t" style="left:247px;top:106.5px;font-size:6px;color:#888">A&#9652; A&#9662;</div>
<div class="a" style="left:271.2px;top:104.8px;width:12px;height:9.2px;background:#e8e8ea;border:0.5px solid #d4d4d4;border-radius:1px"></div>
<div class="t" style="left:273px;top:106px;font-size:6.5px;color:#c07a8a">A</div>
<div class="a" style="left:146.5px;top:117.7px;width:103.5px;height:8.7px;background:#e8e8ea;border:0.5px solid #d4d4d4;border-radius:1px"></div>
<div class="t" style="left:150px;top:119.5px;font-size:5.5px;color:#888;word-spacing:3.5px">B I U abc X&#178; X&#8322; AV AA</div>
<div class="a" style="left:251px;top:117.7px;width:32px;height:8.7px;background:#e8e8ea;border:0.5px solid #d4d4d4;border-radius:1px"></div>
<div class="a" style="left:253px;top:119px;width:7px;height:6px;background:#f0e040"></div>
<div class="t" style="left:268px;top:118.5px;font-size:6px;color:#777">A</div>
<div class="a" style="left:267px;top:124.5px;width:8px;height:1.5px;background:#e04040"></div>
<div class="a" style="left:290.5px;top:105.7px;width:16.19999999999999px;height:8.799999999999997px;background:#ebebed;border:0.6px solid #d6d6d8;border-radius:1.5px"></div>
<div class="a" style="left:308.3px;top:105.7px;width:14.099999999999966px;height:8.799999999999997px;background:#ebebed;border:0.6px solid #d6d6d8;border-radius:1.5px"></div>
<div class="a" style="left:325px;top:105.7px;width:24.19999999999999px;height:8.799999999999997px;background:#ebebed;border:0.6px solid #d6d6d8;border-radius:1.5px"></div>
<div class="a" style="left:351.5px;top:105.7px;width:14.199999999999989px;height:8.799999999999997px;background:#ebebed;border:0.6px solid #d6d6d8;border-radius:1.5px"></div>
<div class="a" style="left:368.6px;top:105.7px;width:14.099999999999966px;height:8.799999999999997px;background:#ebebed;border:0.6px solid #d6d6d8;border-radius:1.5px"></div>
<div class="a" style="left:290.5px;top:117.5px;width:48.5px;height:9.200000000000003px;background:#ebebed;border:0.6px solid #d6d6d8;border-radius:1.5px"></div>
<div class="a" style="left:342.2px;top:117.5px;width:13.800000000000011px;height:9.200000000000003px;background:#ebebed;border:0.6px solid #d6d6d8;border-radius:1.5px"></div>
<div class="a" style="left:357.6px;top:117.5px;width:12.899999999999977px;height:9.200000000000003px;background:#ebebed;border:0.6px solid #d6d6d8;border-radius:1.5px"></div>
<div class="a" style="left:292px;top:107.5px;width:1.5px;height:1.5px;background:#4a8ad8"></div><div class="a" style="left:292px;top:110px;width:1.5px;height:1.5px;background:#4a8ad8"></div><div class="a" style="left:292px;top:112.5px;width:1.5px;height:1.5px;background:#4a8ad8"></div>
<div class="a" style="left:295px;top:107.5px;width:6px;height:5px;border-top:0.8px solid #9a9aa0;border-bottom:0.8px solid #9a9aa0"></div><div class="a" style="left:295px;top:109.6px;width:6px;height:0.8px;background:#9a9aa0"></div>
<div class="a" style="left:311px;top:107.5px;width:6px;height:5px;border-top:0.8px solid #9a9aa0;border-bottom:0.8px solid #9a9aa0"></div><div class="a" style="left:311px;top:109.6px;width:6px;height:0.8px;background:#9a9aa0"></div>
<div class="a" style="left:310px;top:107.5px;width:0.8px;height:6px;background:#4a8ad8"></div>
<div class="t" style="left:303.5px;top:108.5px;font-size:3.5px;color:#777">&#9660;</div><div class="t" style="left:319.5px;top:108.5px;font-size:3.5px;color:#777">&#9660;</div>
<div class="a" style="left:329px;top:107.5px;width:6px;height:5px;border-top:0.8px solid #9a9aa0;border-bottom:0.8px solid #9a9aa0"></div><div class="a" style="left:329px;top:109.6px;width:6px;height:0.8px;background:#9a9aa0"></div>
<div class="a" style="left:341px;top:107.5px;width:6px;height:5px;border-top:0.8px solid #9a9aa0;border-bottom:0.8px solid #9a9aa0"></div><div class="a" style="left:341px;top:109.6px;width:6px;height:0.8px;background:#9a9aa0"></div>
<div class="a" style="left:327px;top:109px;width:2.5px;height:2.5px;background:#4a8ad8;border-radius:50%"></div><div class="a" style="left:339px;top:109px;width:2.5px;height:2.5px;background:#4a8ad8;border-radius:50%"></div>
<div class="a" style="left:353.5px;top:107.5px;width:2px;height:2px;background:#4a8ad8"></div><div class="a" style="left:353.5px;top:111px;width:2px;height:2px;background:#4a8ad8"></div>
<div class="a" style="left:357px;top:107.5px;width:5px;height:5px;border-top:0.8px solid #9a9aa0;border-bottom:0.8px solid #9a9aa0"></div><div class="a" style="left:357px;top:109.6px;width:5px;height:0.8px;background:#9a9aa0"></div>
<div class="t" style="left:362.5px;top:108.5px;font-size:3.5px;color:#777">&#9660;</div>
<div class="a" style="left:371px;top:107.5px;width:3px;height:5.5px;border-top:0.8px dotted #7cc07c;border-bottom:0.8px dotted #7cc07c"></div><div class="a" style="left:375.5px;top:107.5px;width:3px;height:5.5px;border-top:0.8px dotted #7cc07c;border-bottom:0.8px dotted #7cc07c"></div>
<div class="t" style="left:379.5px;top:108.5px;font-size:3.5px;color:#777">&#9660;</div>
<div class="a" style="left:294px;top:120px;width:6px;height:5px;border-top:0.8px solid #a0a0a6;border-bottom:0.8px solid #a0a0a6"></div><div class="a" style="left:294px;top:122.1px;width:6px;height:0.8px;background:#a0a0a6"></div>
<div class="a" style="left:306px;top:120px;width:6px;height:5px;border-top:0.8px solid #a0a0a6;border-bottom:0.8px solid #a0a0a6"></div><div class="a" style="left:306px;top:122.1px;width:6px;height:0.8px;background:#a0a0a6"></div>
<div class="a" style="left:318px;top:120px;width:6px;height:5px;border-top:0.8px solid #a0a0a6;border-bottom:0.8px solid #a0a0a6"></div><div class="a" style="left:318px;top:122.1px;width:6px;height:0.8px;background:#a0a0a6"></div>
<div class="a" style="left:330px;top:120px;width:6px;height:5px;border-top:0.8px solid #a0a0a6;border-bottom:0.8px solid #a0a0a6"></div><div class="a" style="left:330px;top:122.1px;width:6px;height:0.8px;background:#a0a0a6"></div>
<div class="a" style="left:344.5px;top:119.5px;width:7px;height:6px;border-left:0.8px solid #9a9aa0;border-right:0.8px solid #9a9aa0"></div><div class="a" style="left:347.5px;top:119px;width:1px;height:6px;background:#4a8ad8"></div>
<div class="a" style="left:360px;top:119.5px;width:7px;height:6px;border:0.6px solid #aaa;background:#f6f6f6"></div>
<div class="a" style="left:287px;top:103px;width:0.8px;height:25px;background:#dcdcdc"></div>
<div class="a" style="left:386px;top:105px;width:12px;height:7px;background:#8ed0a0;clip-path:polygon(0 0,70% 0,100% 50%,70% 100%,0 100%)"></div>
<div class="t" style="left:385px;top:119px;font-size:5px;color:#999;line-height:1.1;text-align:center">Convert to<br>SmartArt</div>
<div class="a" style="left:411px;top:103px;width:1px;height:25px;background:#dcdcdc"></div>
<div class="a" style="left:418px;top:104.5px;width:13px;height:11px;background:#fff;border:1px solid #888"></div>
<div class="a" style="left:419.5px;top:109px;width:10px;height:5px;background:#58b058;clip-path:polygon(0 100%,35% 20%,60% 70%,80% 40%,100% 100%)"></div>
<div class="a" style="left:427px;top:106px;width:2.5px;height:2.5px;background:#f0c020;border-radius:50%"></div>
<div class="t" style="left:417px;top:119.5px;font-size:5.5px;color:#3a3a3a">Picture</div>
<div class="a" style="left:441px;top:106px;width:10px;height:7px;border:1px solid #3a80d0;background:#d6e8f8"></div>
<div class="a" style="left:447px;top:104px;width:7px;height:7px;border:1px solid #3a80d0;background:#d6e8f8;transform:rotate(45deg)"></div>
<div class="t" style="left:440px;top:119.5px;font-size:5.5px;color:#3a3a3a">Shapes</div>
<div class="a" style="left:460px;top:105.7px;width:12px;height:10px;border:1px dotted #3a70c0;background:#fff"></div>
<div class="t" style="left:462px;top:107px;font-size:5px;color:#444">A</div>
<div class="t" style="left:461px;top:119.5px;font-size:5.5px;color:#3a3a3a;line-height:1.1;text-align:center">Text<br>Box</div>
<div class="a" style="left:477px;top:103px;width:1px;height:25px;background:#dcdcdc"></div>
<div class="a" style="left:484px;top:106px;width:9px;height:9px;background:#f5c518"></div>
<div class="a" style="left:482px;top:104px;width:4px;height:4px;border:0.7px solid #888;background:#fff"></div>
<div class="a" style="left:491px;top:113px;width:4px;height:4px;border:0.7px solid #888;background:#fff"></div>
<div class="t" style="left:481px;top:119.5px;font-size:5.5px;color:#3a3a3a">Arrange</div>
<div class="a" style="left:505px;top:105px;width:11px;height:10px;border:0.7px solid #ccc;background:#f8f8f8"></div>
<div class="t" style="left:503px;top:119.5px;font-size:5px;color:#aaa;line-height:1.1;text-align:center">Quick<br>Styles</div>
<div class="a" style="left:528px;top:104.5px;width:5px;height:5px;border:0.7px solid #aaa;transform:rotate(45deg)"></div>
<div class="a" style="left:526.5px;top:110.5px;width:7px;height:1.5px;background:#e04040"></div>
<div class="a" style="left:527.5px;top:119px;width:7px;height:1.2px;background:#7a9ad8;transform:rotate(-50deg)"></div>
<div class="a" style="left:526.5px;top:123.5px;width:7px;height:1.5px;background:#4080d0"></div>
<div class="t" style="left:535px;top:107.2px;font-size:5px;color:#aaa;font-weight:bold">Shape Fill &#9662;</div>
<div class="t" style="left:535px;top:119.5px;font-size:5px;color:#aaa;font-weight:bold">Shape Outline &#9662;</div>

<!-- slide -->
<div class="a" style="left:197px;top:140px;width:292px;height:220px;background:#fff;box-shadow:0 1px 2px rgba(0,0,0,.15)"></div>
<div class="a" style="left:197px;top:140px;width:292px;height:12px;background:#21085f"></div>
<div class="a" style="left:197px;top:356px;width:292px;height:4px;background:#21085f"></div>


<!-- slide content -->
<div class="t" style="left:197px;top:214.5px;width:292px;text-align:center;font-family:'Liberation Serif',serif;font-size:16.3px;color:#21085f;line-height:18.8px;-webkit-text-stroke:.35px #21085f">Transportation Investment, Urban<br>Vibrancy and Real Estate Values</div>
<div class="a" style="left:217px;top:261px;width:250px;height:1.5px;background:linear-gradient(90deg,rgba(33,8,95,0),#21085f 25%,#21085f 75%,rgba(33,8,95,0))"></div>
<div class="t" style="left:197px;top:274.5px;width:292px;text-align:center;font-family:'Liberation Serif',serif;font-size:10px;font-weight:bold;color:#21085f">Siqi Zheng</div>
<div class="t" style="left:197px;top:301px;width:292px;text-align:center;font-family:'Liberation Serif',serif;font-size:7.3px;color:#21085f">Department of Urban Studies and Planning, MIT</div>
<!-- thumbnails pane -->
<svg class="a" style="left:24px;top:131px" width="37" height="283">
<text x="4" y="10.5" font-family="Liberation Sans" font-size="5.8" font-weight="bold" fill="#3a3a3a">1</text>
<path d="M6.5 13.0V16.0M5.2 13.7L7.8 15.3M7.8 13.7L5.2 15.3" stroke="#8a8a8a" stroke-width=".6"/>
<rect x="13.8" y="4.6" width="15.6" height="12.6" fill="#fff" stroke="#d42f1c" stroke-width="1.5"/>
<rect x="17" y="9.5" width="9" height="1.2" fill="#7a70a8"/><rect x="18" y="11.8" width="7" height="0.6" fill="#aaa"/>
<text x="4" y="28.0" font-family="Liberation Sans" font-size="5.8" font-weight="bold" fill="#3a3a3a">2</text>
<path d="M6.5 30.5V33.5M5.2 31.2L7.8 32.8M7.8 31.2L5.2 32.8" stroke="#8a8a8a" stroke-width=".6"/>
<rect x="14.25" y="22.2" width="14.5" height="11" fill="#fff" stroke="#c4c4c8" stroke-width=".5"/>
<rect x="14.5" y="22.5" width="14" height="0.9" fill="#2a1a70"/>
<g transform="translate(0 21.5)"><rect x="16" y="5" width="8" height="1" fill="#aab"/><rect x="16" y="7" width="6" height="0.8" fill="#bbc"/></g>
<text x="4" y="45.5" font-family="Liberation Sans" font-size="5.8" font-weight="bold" fill="#3a3a3a">3</text>
<path d="M6.5 48.0V51.0M5.2 48.7L7.8 50.3M7.8 48.7L5.2 50.3" stroke="#8a8a8a" stroke-width=".6"/>
<rect x="14.25" y="39.8" width="14.5" height="11" fill="#fff" stroke="#c4c4c8" stroke-width=".5"/>
<rect x="14.5" y="40.0" width="14" height="0.9" fill="#2a1a70"/>
<g transform="translate(0 39.0)"><rect x="15" y="4.5" width="3.5" height="3" fill="#3a3a2a"/><rect x="19" y="4.5" width="3.5" height="3" fill="#4a4030"/><rect x="23" y="4.5" width="3.5" height="3" fill="#2a2a2a"/></g>
<text x="4" y="63.0" font-family="Liberation Sans" font-size="5.8" font-weight="bold" fill="#3a3a3a">4</text>
<path d="M6.5 65.5V68.5M5.2 66.2L7.8 67.8M7.8 66.2L5.2 67.8" stroke="#8a8a8a" stroke-width=".6"/>
<rect x="14.25" y="57.2" width="14.5" height="11" fill="#fff" stroke="#c4c4c8" stroke-width=".5"/>
<rect x="14.5" y="57.5" width="14" height="0.9" fill="#2a1a70"/>
<g transform="translate(0 56.5)"><rect x="16" y="4" width="5" height="1" fill="#889"/><rect x="16" y="6.5" width="3" height="3" fill="#333"/><rect x="21" y="6.5" width="3" height="3" fill="#555"/></g>
<text x="4" y="80.5" font-family="Liberation Sans" font-size="5.8" font-weight="bold" fill="#3a3a3a">5</text>
<path d="M6.5 83.0V86.0M5.2 83.7L7.8 85.3M7.8 83.7L5.2 85.3" stroke="#8a8a8a" stroke-width=".6"/>
<rect x="14.25" y="74.8" width="14.5" height="11" fill="#fff" stroke="#c4c4c8" stroke-width=".5"/>
<rect x="14.5" y="75.0" width="14" height="0.9" fill="#2a1a70"/>
<g transform="translate(0 74.0)"><rect x="16" y="4" width="4" height="1" fill="#aab"/><rect x="21" y="4" width="5" height="3" fill="#222"/><rect x="16" y="7" width="4" height="1" fill="#aab"/></g>
<text x="4" y="98.0" font-family="Liberation Sans" font-size="5.8" font-weight="bold" fill="#3a3a3a">6</text>
<path d="M6.5 100.5V103.5M5.2 101.2L7.8 102.8M7.8 101.2L5.2 102.8" stroke="#8a8a8a" stroke-width=".6"/>
<rect x="14.25" y="92.2" width="14.5" height="11" fill="#fff" stroke="#c4c4c8" stroke-width=".5"/>
<rect x="14.5" y="92.5" width="14" height="0.9" fill="#2a1a70"/>
<g transform="translate(0 91.5)"><rect x="15" y="5" width="12" height="1.5" fill="#8a60c0"/><rect x="15" y="7" width="6" height="1" fill="#c03060"/></g>
<text x="4" y="115.5" font-family="Liberation Sans" font-size="5.8" font-weight="bold" fill="#3a3a3a">7</text>
<path d="M6.5 118.0V121.0M5.2 118.7L7.8 120.3M7.8 118.7L5.2 120.3" stroke="#8a8a8a" stroke-width=".6"/>
<rect x="14.25" y="109.8" width="14.5" height="11" fill="#fff" stroke="#c4c4c8" stroke-width=".5"/>
<rect x="14.5" y="110.0" width="14" height="0.9" fill="#2a1a70"/>
<g transform="translate(0 109.0)"><rect x="16" y="5" width="8" height="0.8" fill="#bbc"/></g>
<text x="4" y="133.0" font-family="Liberation Sans" font-size="5.8" font-weight="bold" fill="#3a3a3a">8</text>
<path d="M6.5 135.5V138.5M5.2 136.2L7.8 137.8M7.8 136.2L5.2 137.8" stroke="#8a8a8a" stroke-width=".6"/>
<rect x="14.25" y="127.2" width="14.5" height="11" fill="#fff" stroke="#c4c4c8" stroke-width=".5"/>
<rect x="14.5" y="127.5" width="14" height="0.9" fill="#2a1a70"/>
<g transform="translate(0 126.5)"><rect x="16" y="5" width="8" height="0.8" fill="#bbc"/><rect x="20" y="7" width="5" height="0.8" fill="#bbc"/></g>
<text x="4" y="150.5" font-family="Liberation Sans" font-size="5.8" font-weight="bold" fill="#3a3a3a">9</text>
<path d="M6.5 153.0V156.0M5.2 153.7L7.8 155.3M7.8 153.7L5.2 155.3" stroke="#8a8a8a" stroke-width=".6"/>
<rect x="14.25" y="144.8" width="14.5" height="11" fill="#fff" stroke="#c4c4c8" stroke-width=".5"/>
<rect x="14.5" y="145.0" width="14" height="0.9" fill="#2a1a70"/>
<g transform="translate(0 144.0)"><rect x="16" y="5" width="8" height="0.8" fill="#99a"/><rect x="16" y="7" width="7" height="0.8" fill="#bbc"/></g>
<text x="2.5" y="168.0" font-family="Liberation Sans" font-size="5.8" font-weight="bold" fill="#3a3a3a">10</text>
<path d="M6.5 170.5V173.5M5.2 171.2L7.8 172.8M7.8 171.2L5.2 172.8" stroke="#8a8a8a" stroke-width=".6"/>
<rect x="14.25" y="162.2" width="14.5" height="11" fill="#fff" stroke="#c4c4c8" stroke-width=".5"/>
<rect x="14.5" y="162.5" width="14" height="0.9" fill="#2a1a70"/>
<g transform="translate(0 161.5)"><rect x="16" y="4" width="9" height="5" fill="#8aa0c0"/><rect x="18" y="5" width="4" height="2" fill="#556"/></g>
<text x="2.5" y="185.5" font-family="Liberation Sans" font-size="5.8" font-weight="bold" fill="#3a3a3a">11</text>
<path d="M6.5 188.0V191.0M5.2 188.7L7.8 190.3M7.8 188.7L5.2 190.3" stroke="#8a8a8a" stroke-width=".6"/>
<rect x="14.25" y="179.8" width="14.5" height="11" fill="#fff" stroke="#c4c4c8" stroke-width=".5"/>
<rect x="14.5" y="180.0" width="14" height="0.9" fill="#2a1a70"/>
<g transform="translate(0 179.0)"><rect x="16" y="4" width="9" height="5" fill="none" stroke="#666" stroke-width=".6"/><rect x="18" y="5.5" width="4" height="2" fill="#999"/></g>
<text x="2.5" y="203.0" font-family="Liberation Sans" font-size="5.8" font-weight="bold" fill="#3a3a3a">12</text>
<path d="M6.5 205.5V208.5M5.2 206.2L7.8 207.8M7.8 206.2L5.2 207.8" stroke="#8a8a8a" stroke-width=".6"/>
<rect x="14.25" y="197.2" width="14.5" height="11" fill="#fff" stroke="#c4c4c8" stroke-width=".5"/>
<rect x="14.5" y="197.5" width="14" height="0.9" fill="#2a1a70"/>
<g transform="translate(0 196.5)"><rect x="16" y="5" width="8" height="0.8" fill="#99a"/><rect x="16" y="7" width="8" height="0.8" fill="#bbc"/></g>
<text x="2.5" y="220.5" font-family="Liberation Sans" font-size="5.8" font-weight="bold" fill="#3a3a3a">13</text>
<path d="M6.5 223.0V226.0M5.2 223.7L7.8 225.3M7.8 223.7L5.2 225.3" stroke="#8a8a8a" stroke-width=".6"/>
<rect x="14.25" y="214.8" width="14.5" height="11" fill="#fff" stroke="#c4c4c8" stroke-width=".5"/>
<rect x="14.5" y="215.0" width="14" height="0.9" fill="#2a1a70"/>
<g transform="translate(0 214.0)"><rect x="16" y="4.5" width="9" height="4.5" fill="#a8c8e8"/><rect x="18" y="5" width="1" height="3.5" fill="#5a8ac0"/><rect x="21" y="5" width="1" height="3.5" fill="#5a8ac0"/></g>
<text x="2.5" y="238.0" font-family="Liberation Sans" font-size="5.8" font-weight="bold" fill="#3a3a3a">14</text>
<path d="M6.5 240.5V243.5M5.2 241.2L7.8 242.8M7.8 241.2L5.2 242.8" stroke="#8a8a8a" stroke-width=".6"/>
<rect x="14.25" y="232.2" width="14.5" height="11" fill="#fff" stroke="#c4c4c8" stroke-width=".5"/>
<rect x="14.5" y="232.5" width="14" height="0.9" fill="#2a1a70"/>
<g transform="translate(0 231.5)"><rect x="15" y="4" width="12" height="4" fill="#2a2018"/><rect x="18" y="5" width="5" height="2" fill="#8a5030"/></g>
<text x="2.5" y="255.5" font-family="Liberation Sans" font-size="5.8" font-weight="bold" fill="#3a3a3a">15</text>
<path d="M6.5 258.0V261.0M5.2 258.7L7.8 260.3M7.8 258.7L5.2 260.3" stroke="#8a8a8a" stroke-width=".6"/>
<rect x="14.25" y="249.8" width="14.5" height="11" fill="#fff" stroke="#c4c4c8" stroke-width=".5"/>
<rect x="14.5" y="250.0" width="14" height="0.9" fill="#2a1a70"/>
<g transform="translate(0 249.0)"><rect x="15" y="5.5" width="12" height="0.8" fill="#5a7ab0"/><rect x="18" y="4.5" width="5" height="3" fill="#fff" stroke="#5a7ab0" stroke-width=".5"/></g>
<text x="2.5" y="273.0" font-family="Liberation Sans" font-size="5.8" font-weight="bold" fill="#3a3a3a">16</text>
<path d="M6.5 275.5V278.5M5.2 276.2L7.8 277.8M7.8 276.2L5.2 277.8" stroke="#8a8a8a" stroke-width=".6"/>
<rect x="14.25" y="267.2" width="14.5" height="11" fill="#fff" stroke="#c4c4c8" stroke-width=".5"/>
<rect x="14.5" y="267.5" width="14" height="0.9" fill="#2a1a70"/>
<g transform="translate(0 266.5)"><rect x="17" y="4" width="8" height="6" rx="2" fill="#4a5aa0"/><rect x="19" y="5.5" width="4" height="2.5" fill="#8ab0e0"/></g>
</svg>
<svg class="a" style="left:41px;top:145px" width="6" height="9"><path d="M1 1V7L2.6 5.6L3.8 8.2L4.8 7.7L3.7 5.2L5.6 5Z" fill="#111" stroke="#fff" stroke-width=".5"/></svg>
<div class="t" style="left:65px;top:374.5px;font-size:5.2px;color:#222;font-weight:bold">Click to add notes</div>
<div class="t" style="left:34.6px;top:416.2px;font-size:5.3px;color:#555">Slide 1 of 45</div>
<div class="t" style="left:72.7px;top:416.2px;font-size:5.3px;color:#555">English (United States)</div>
<div class="t" style="left:410px;top:416px;font-size:5.5px;color:#666">&#9998; Notes</div>
<div class="a" style="left:442px;top:416px;width:5px;height:4px;background:#555"></div>
<div class="t" style="left:449px;top:416px;font-size:5.5px;color:#666">Comments</div>
<div class="a" style="left:481.8px;top:414.5px;width:9.7px;height:8.5px;background:#b8b8bc"></div>
<div class="a" style="left:484px;top:416px;width:5px;height:5.5px;border:0.7px solid #fff"></div>
<svg class="a" style="left:497px;top:415px" width="8" height="7"><rect x="0.5" y="0.5" width="3" height="2.5" fill="#555"/><rect x="4.5" y="0.5" width="3" height="2.5" fill="#555"/><rect x="0.5" y="4" width="3" height="2.5" fill="#555"/><rect x="4.5" y="4" width="3" height="2.5" fill="#555"/></svg>
<div class="a" style="left:513px;top:415.5px;width:7px;height:5px;border:0.7px solid #666"></div>
<div class="a" style="left:526px;top:418.5px;width:3px;height:0.8px;background:#666"></div>
<div class="a" style="left:533.6px;top:418.5px;width:41px;height:0.8px;background:#888"></div>
<div class="a" style="left:552px;top:416.5px;width:4px;height:4px;border-radius:50%;background:#fff;border:0.5px solid #aaa"></div>
<div class="t" style="left:577.5px;top:415.5px;font-size:6px;color:#666">+</div>
<div class="t" style="left:588.5px;top:416px;font-size:5.5px;color:#666">90%</div>
<div class="a" style="left:607px;top:415.5px;width:6px;height:6px;border:0.7px solid #777"></div>

<!-- taskbar -->
<div class="a" style="left:0;top:459px;width:866px;height:28px;background:linear-gradient(90deg,#d6d8dc 0%,#d9d4d8 50%,#ddd0d5 100%)"></div>
<div class="a" style="left:33px;top:460px;width:231px;height:27px;background:#fff"></div>

<!-- taskbar content -->
<svg class="a" style="left:10px;top:467px" width="13" height="12"><path d="M0.7 1.8L5.6 1.1V5.6H0.7ZM6.4 1L12.3 0.2V5.6H6.4ZM0.7 6.4H5.6V10.9L0.7 10.2ZM6.4 6.4H12.3V11.8L6.4 11Z" fill="#111"/></svg>
<svg class="a" style="left:40px;top:467px" width="13" height="13"><circle cx="7.8" cy="5" r="3.8" fill="none" stroke="#222" stroke-width="1.2"/><path d="M5 7.8L1.2 11.6" stroke="#222" stroke-width="1.4"/></svg>
<div class="t j" style="left:60px;top:468.5px;width:129.4px;font-size:10.8px;color:#222"><span class="c">在这里输入你要搜索的内容</span></div>
<div class="a" style="left:276px;top:468px;width:10px;height:10px;border-radius:50%;border:1.6px solid #111"></div>
<svg class="a" style="left:306px;top:467px" width="14" height="12"><rect x="1" y="2" width="8" height="8" fill="none" stroke="#333" stroke-width="1.1"/><path d="M11 1V11M1 0.8H9M1 11.2H9" stroke="#333" stroke-width="1.1"/></svg>
<div class="a" style="left:340.8px;top:467px;width:15.5px;height:12px;background:#f6c13a;border-radius:1px"></div>
<div class="a" style="left:340.8px;top:466px;width:7px;height:3px;background:#e0a020"></div>
<div class="a" style="left:340.8px;top:472px;width:15.5px;height:2.2px;background:#2d7cd4"></div>
<div class="a" style="left:349px;top:474.5px;width:4px;height:3px;background:#2d7cd4"></div>
<div class="a" style="left:382px;top:467.5px;width:9px;height:10px;background:#fff;border:1px solid #2a72c8"></div>
<div class="a" style="left:374.8px;top:467px;width:10px;height:11px;background:#0a64c6;border-radius:1px"></div>
<div class="t" style="left:376.5px;top:468.5px;font-size:8px;color:#fff;font-weight:bold">O</div>
<div class="a" style="left:414px;top:466.5px;width:9.5px;height:12px;background:#fff;border:1px solid #2a5698"></div>
<div class="a" style="left:408px;top:467.5px;width:10px;height:10px;background:#2a5698;border-radius:1px"></div>
<div class="t" style="left:408.5px;top:469px;font-size:7.5px;color:#fff;font-weight:bold">W</div>
<svg class="a" style="left:443px;top:466px" width="15" height="15"><path d="M7.5 1A6.5 6.5 0 1 0 13.5 10H10.5A3.5 3 0 0 1 4.2 8.2H14A6.5 6.5 0 0 0 7.5 1ZM4.5 6A3.2 2.8 0 0 1 10.5 6Z" fill="#1877d6"/></svg>
<div class="a" style="left:467.6px;top:459px;width:30px;height:28px;background:rgba(255,255,255,.35)"></div>
<div class="a" style="left:475px;top:466px;width:16px;height:14px;background:#2d8cff;border-radius:4px"></div>
<svg class="a" style="left:477px;top:469px" width="12" height="8"><rect x="0.5" y="0.8" width="7" height="6.2" rx="1" fill="#fff"/><path d="M8 3L11 1.2V6.6L8 4.8Z" fill="#fff"/></svg>
<div class="a" style="left:509px;top:467px;width:11px;height:9px;background:#54c03a;border-radius:50%"></div>
<div class="a" style="left:515px;top:471px;width:10px;height:8px;background:#f0f0f0;border-radius:50%;border:.7px solid #a8d890"></div>
<div class="a" style="left:335px;top:485px;width:28px;height:2px;background:#3b7fd6"></div>
<div class="a" style="left:403px;top:485px;width:27px;height:2px;background:#3b7fd6"></div>
<div class="a" style="left:467.6px;top:485px;width:30px;height:2px;background:#3b7fd6"></div>
<div class="a" style="left:503px;top:485px;width:28.6px;height:2px;background:#3b7fd6"></div>
<svg class="a" style="left:668px;top:468px" width="10" height="7"><path d="M1 5.5L5 1.5L9 5.5" stroke="#222" stroke-width="1" fill="none"/></svg>
<div class="a" style="left:686.5px;top:466px;width:4.5px;height:8px;background:#222;border-radius:2px"></div>
<div class="a" style="left:688.4px;top:474px;width:1px;height:3px;background:#222"></div>
<div class="a" style="left:700px;top:467px;width:10px;height:9px;border:1px solid #333;border-radius:1px"></div>
<div class="a" style="left:707px;top:473.5px;width:4px;height:4px;background:#f08010;border-radius:50%"></div>
<div class="a" style="left:716.5px;top:469px;width:10px;height:6px;border:1px solid #333"></div>
<div class="a" style="left:717.5px;top:470px;width:4px;height:4px;background:#222"></div>
<svg class="a" style="left:732px;top:466px" width="11" height="12"><path d="M1 11A9 9 0 0 1 10 2M3.5 11A6.5 6.5 0 0 1 10 4.5M6 11A4 4 0 0 1 10 7" stroke="#777" stroke-width="1" fill="none"/></svg>
<svg class="a" style="left:747px;top:466px" width="12" height="12"><path d="M1 4.5H3.5L6.5 2V10L3.5 7.5H1Z" fill="none" stroke="#333" stroke-width=".9"/><path d="M8 4A3 3 0 0 1 8 8M9.5 2.5A5 5 0 0 1 9.5 9.5" stroke="#333" stroke-width=".8" fill="none"/></svg>
<div class="t" style="left:763.5px;top:467px;font-size:11px;color:#111"><span class="c">中</span></div>
<div class="t" style="left:791.5px;top:463px;font-size:8.8px;color:#222">21:40</div>
<div class="t" style="left:784px;top:475px;font-size:8.8px;color:#222">2020/3/2</div>
<div class="a" style="left:837px;top:467px;width:12px;height:10px;background:#222;border-radius:1px"></div>
<div class="a" style="left:843px;top:472px;width:12px;height:11px;background:#e8e0e4;border-radius:50%;border:1px solid #444"></div>
<div class="t" style="left:844.5px;top:474.5px;font-size:7px;color:#111;font-weight:bold">20</div>

</body></html>
